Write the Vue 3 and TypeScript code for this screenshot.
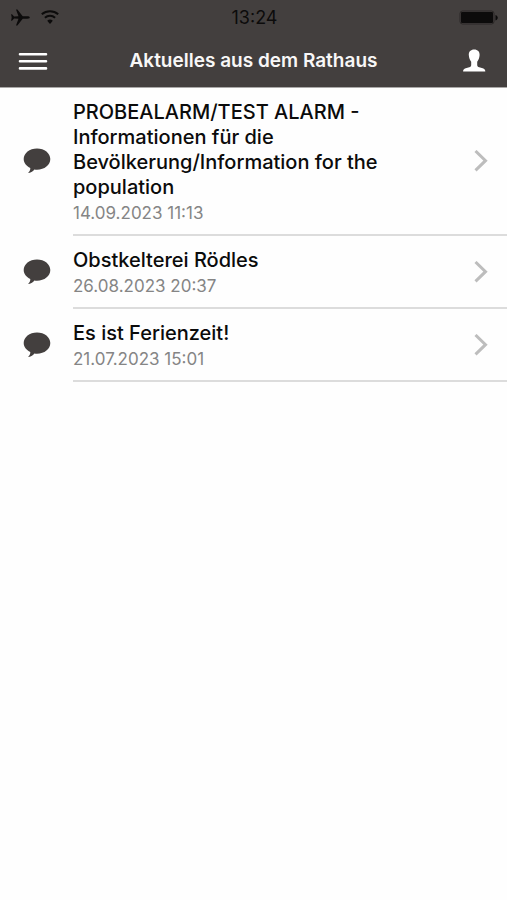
<script setup lang="ts">
interface NewsItem {
  id: number
  title: string
  date: string
}

const pageTitle = 'Aktuelles aus dem Rathaus'

const items: NewsItem[] = [
  {
    id: 1,
    title: 'PROBEALARM/TEST ALARM - Informationen für die Bevölkerung/Information for the population',
    date: '14.09.2023 11:13',
  },
  { id: 2, title: 'Obstkelterei Rödles', date: '26.08.2023 20:37' },
  { id: 3, title: 'Es ist Ferienzeit!', date: '21.07.2023 15:01' },
]
</script>

<template>
  <div class="app">
    <header class="header">
      <div class="status">
        <div class="status-left">
          <svg class="plane" viewBox="0 0 20 18" aria-hidden="true">
            <path d="M19.800 8.500c0-.8-1.200-1.200-2.500-1.200h-4.600L7.400.5H6l2.500 6.700-4.400.2L2 5.300H1.100L1.700 8.500l-.6 3.200H2l2.100-2.100 4.400.2L6 16.500h1.400l5.300-6.800h4.600c1.300 0 2.500-.4 2.500-1.200z" />
          </svg>
          <svg class="wifi" viewBox="0 0 20 16" aria-hidden="true">
            <path class="arc" d="M1.800 4.200a12.500 12.500 0 0 1 16.400 0M4.900 7.700a7.800 7.800 0 0 1 10.200 0" />
            <path d="M10 14 7.200 10.800a4.200 4.200 0 0 1 5.600 0z" />
          </svg>
        </div>
        <time class="clock">13:24</time>
        <svg class="battery" viewBox="0 0 40 16" aria-hidden="true">
          <rect class="battery-shell" x="1" y="1" width="34" height="13" rx="2.500" />
          <rect x="2" y="2" width="32" height="11" rx="1" />
          <path d="M36.500 5c3 1 3 4.500 0 5.500z" />
        </svg>
      </div>
      <nav class="bar">
        <button class="bar-button" type="button" aria-label="Menü">
          <svg class="menu" viewBox="0 0 30 20" stroke-width="2.600" aria-hidden="true">
            <path d="M2 3.300h26M2 10.300h26M2 17.400h26" />
          </svg>
        </button>
        <h1 class="page-title">{{ pageTitle }}</h1>
        <button class="bar-button" type="button" aria-label="Profil">
          <svg class="person" viewBox="0 0 24 24" aria-hidden="true">
            <path d="M12.200.4c3.500 0 5.600 2.200 5.400 5.700-.1 3-1.300 5.200-2.400 6.700v3.200c0 1.300.7 1.900 2 2.300l3.500.9c1.800.5 2.600 1.500 2.600 3.300H1.100c0-1.800.8-2.800 2.600-3.300l3.500-.9c1.300-.4 2-1 2-2.300v-3.200C8.100 11.300 6.900 9.100 6.800 6.100 6.600 2.600 8.700.4 12.200.4z" />
          </svg>
        </button>
      </nav>
    </header>

    <main>
      <ul class="list">
        <li v-for="item in items" :key="item.id">
          <a class="item" href="#">
            <svg class="bubble" viewBox="0 0 28 26" aria-hidden="true">
              <path d="M14 .4c7.500 0 13.300 4.700 13.300 10.700S21.500 21.800 14 21.800c-1 0-1.700 0-2.600-.2-1.300 1.700-3.300 3.200-5.700 3.500-.4 0-.5-.4-.2-.7 1.200-1.200 1.900-2.600 1.800-4.400C3.300 18.300.7 14.900.7 11.100.7 5.100 6.500.4 14 .4z" />
            </svg>
            <span class="content">
              <span class="text">
                <span class="title">{{ item.title }}</span>
                <time class="date">{{ item.date }}</time>
              </span>
              <svg class="chevron" viewBox="0 0 14 22" aria-hidden="true">
                <path d="M1.500 1 11.500 10.700 1.500 20.400" />
              </svg>
            </span>
          </a>
        </li>
      </ul>
    </main>
  </div>
</template>

<style>
body {
  margin: 0;
  background: #fefefe;
}
</style>

<style scoped>
.app {
  min-height: 100vh;
  background: #fefefe;
  color: #0b0b0b;
  font-family: Inter, "Liberation Sans", sans-serif;
}

.header {
  background: #433f3e;
  border-bottom: 1px solid #aaa8a7;
}

.status {
  display: grid;
  grid-template-columns: 1fr auto 1fr;
  align-items: center;
  height: 35px;
  padding: 0 8px 0 10px;
  color: #0c0b0b;
}

.status svg {
  fill: #0c0b0b;
}

.status-left {
  display: flex;
  align-items: center;
  gap: 10px;
}

.plane {
  width: 20px;
  height: 18px;
}

.wifi {
  width: 20px;
  height: 16px;
}

.wifi .arc {
  fill: none;
  stroke: #0c0b0b;
  stroke-width: 2;
}

.clock {
  font-size: 18px;
  line-height: 20px;
}

.battery {
  justify-self: end;
  width: 40px;
  height: 16px;
}

.status .battery-shell {
  fill: none;
  stroke: #2a2726;
}

.bar {
  display: flex;
  align-items: center;
  justify-content: space-between;
  height: 52px;
  padding: 0 11px;
}

.bar-button {
  display: flex;
  align-items: center;
  justify-content: center;
  width: 44px;
  height: 44px;
  padding: 0;
  border: 0;
  background: none;
}

.menu {
  width: 30px;
  height: 20px;
  stroke: #fff;
  stroke-linecap: round;
}

.person {
  width: 24px;
  height: 24px;
  fill: #fff;
}

.page-title {
  margin: 0;
  color: #f8f7f7;
  font-size: 19px;
  font-weight: 600;
  line-height: 24px;
}

.list {
  margin: 0;
  padding: 0;
  list-style: none;
}

.item {
  display: flex;
  align-items: center;
  gap: 22px;
  padding-left: 23px;
  color: inherit;
  text-decoration: none;
}

.bubble {
  flex: none;
  width: 28px;
  height: 26px;
  margin-bottom: 2px;
  fill: #433f3e;
}

.content {
  display: flex;
  flex: 1;
  align-items: center;
  gap: 60px;
  min-width: 0;
  padding-right: 19px;
  border-bottom: 2px solid #dcdcdc;
}

.text {
  display: flex;
  flex: 1;
  flex-direction: column;
  min-width: 0;
  padding: 12px 0 8px;
}

.title {
  font-size: 20px;
  font-weight: 500;
  line-height: 25px;
}

.date {
  color: #858585;
  font-size: 17px;
  line-height: 26px;
}

.chevron {
  flex: none;
  width: 14px;
  height: 22px;
  fill: none;
  stroke: #bdbdbd;
  stroke-width: 3;
}
</style>
